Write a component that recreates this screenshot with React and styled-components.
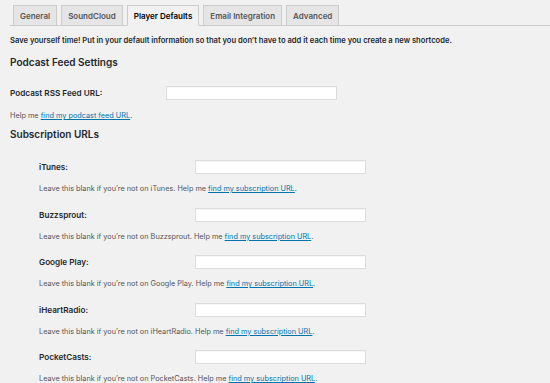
import React from 'react'
import styled, { createGlobalStyle } from 'styled-components'

const GlobalStyle = createGlobalStyle`
    html, body {
        margin: 0;
        padding: 0;
        background: #f1f1f1;
    }
    body {
        font-family: Inter, "Liberation Sans", sans-serif;
        color: #23282d;
        -webkit-font-smoothing: antialiased;
    }
`

const Page = styled.div`
    padding: 0 10px;
    width: 550px;
    box-sizing: border-box;
`

const TabBar = styled.nav`
    display: flex;
    gap: 4px;
    padding: 5px 0 0 3px;
    height: 20px;
    border-bottom: 1px solid #cccccc;
    margin: 0 -10px 0 0;
`

const Tab = styled.a`
    box-sizing: border-box;
    height: 21px;
    margin-bottom: -1px;
    padding: 0 ${p => p.$pad}px;
    display: flex;
    align-items: center;
    font-size: 8px;
    font-weight: 600;
    color: ${p => (p.$active ? '#000' : '#555')};
    background: ${p => (p.$active ? '#f1f1f1' : '#e5e5e5')};
    border: 1px solid #cccccc;
    border-bottom-color: ${p => (p.$active ? '#f1f1f1' : '#cccccc')};
    white-space: nowrap;
`

const Intro = styled.p`
    margin: 10px 0 0;
    font-size: 7.6px;
    line-height: 10px;
    font-weight: 600;
    color: #23282d;
`

const Heading = styled.h2`
    margin: ${p => p.$top}px 0 0;
    font-size: 10px;
    line-height: 14px;
    font-weight: 600;
    color: #23282d;
`

const Row = styled.div`
    display: flex;
    align-items: center;
    height: 14px;
    margin-top: ${p => p.$top}px;
    padding-left: ${p => p.$indent}px;
`

const Label = styled.label`
    width: 156px;
    flex: none;
    font-size: 8.2px;
    font-weight: 600;
    color: #23282d;
`

const Input = styled.input`
    box-sizing: border-box;
    width: 171px;
    height: 14px;
    margin: 0;
    padding: 0 4px;
    background: #ffffff;
    border: 1px solid #dddddd;
    box-shadow: inset 0 1px 1px rgba(0, 0, 0, 0.04);
    border-radius: 0;
    outline: none;
`

const Help = styled.p`
    margin: ${p => p.$top}px 0 0;
    padding-left: ${p => p.$indent}px;
    font-size: 7.3px;
    line-height: 10px;
    color: #555555;
`

const Link = styled.a`
    color: #0073aa;
    text-decoration: underline;
`

const tabs = [
    { name: 'General', pad: 6 },
    { name: 'SoundCloud', pad: 6 },
    { name: 'Player Defaults', pad: 6, active: true },
    { name: 'Email Integration', pad: 6 },
    { name: 'Advanced', pad: 6 },
]

const services = ['iTunes', 'Buzzsprout', 'Google Play', 'iHeartRadio', 'PocketCasts']

const App = () => {
    return (
        <Page>
            <GlobalStyle />
            <TabBar>
                {tabs.map(t => (
                    <Tab key={t.name} $pad={t.pad} $active={t.active}>{t.name}</Tab>
                ))}
            </TabBar>

            <Intro>
                Save yourself time! Put in your default information so that you don’t have to add it each time you create a new shortcode.
            </Intro>

            <Heading $top={9}>Podcast Feed Settings</Heading>
            <Row $top={17} $indent={0}>
                <Label>Podcast RSS Feed URL:</Label>
                <Input type="text" />
            </Row>
            <Help $top={11} $indent={0}>
                Help me <Link href="#">find my podcast feed URL</Link>.
            </Help>

            <Heading $top={6}>Subscription URLs</Heading>
            {services.map((s, i) => (
                <React.Fragment key={s}>
                    <Row $top={i === 0 ? 19 : 13.5} $indent={29}>
                        <Label>{s}:</Label>
                        <Input type="text" />
                    </Row>
                    <Help $top={10} $indent={29}>
                        Leave this blank if you’re not on {s}. Help me <Link href="#">find my subscription URL</Link>.
                    </Help>
                </React.Fragment>
            ))}
        </Page>
    )
}

export default App
